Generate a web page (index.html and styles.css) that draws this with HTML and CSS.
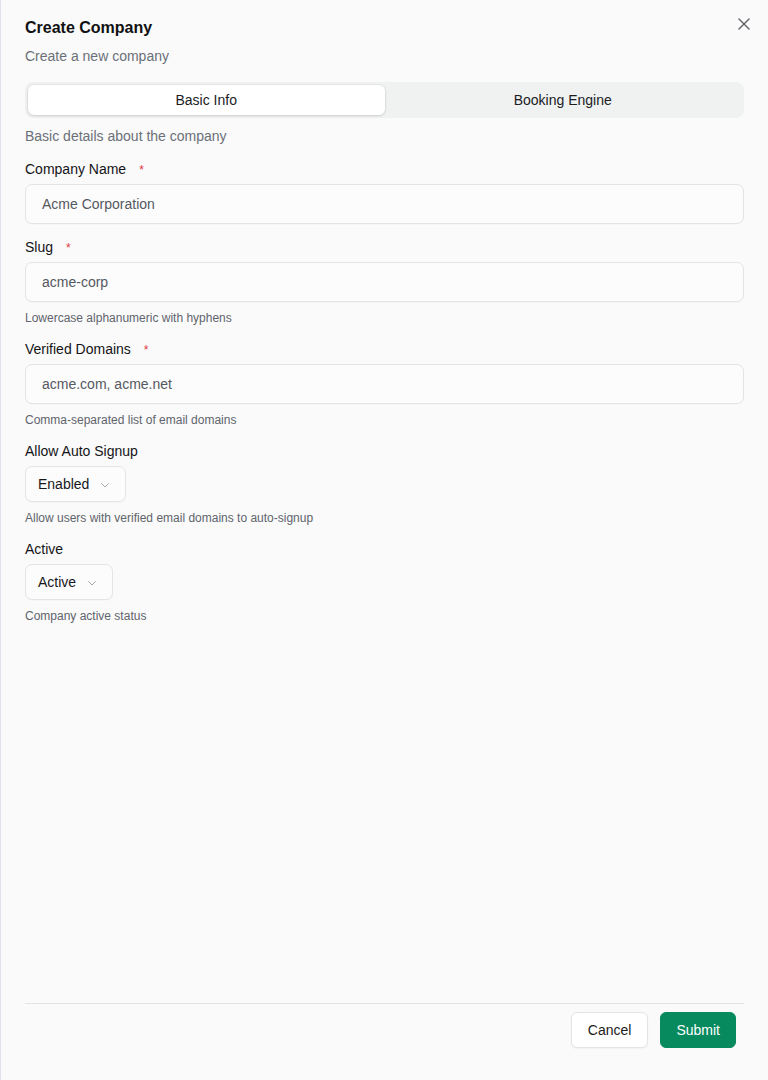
FILE: index.html
```html
<!DOCTYPE html>
<html lang="en">
<head>
<meta charset="utf-8">
<title>Create Company</title>
<link rel="stylesheet" href="styles.css">
</head>
<body>
<div class="sheet">
  <header class="head">
    <h1 class="title">Create Company</h1>
    <p class="subtitle">Create a new company</p>
    <button class="close" aria-label="Close">
      <svg width="16" height="16" viewBox="0 0 16 16" fill="none" stroke="currentColor" stroke-width="1.4" stroke-linecap="round"><path d="M3 3l10 10M13 3L3 13"/></svg>
    </button>
  </header>

  <div class="tabs">
    <div class="tab active">Basic Info</div>
    <div class="tab">Booking Engine</div>
  </div>

  <p class="desc">Basic details about the company</p>

  <div class="form">
    <div class="field">
      <label class="label">Company Name<span class="req">*</span></label>
      <div class="input">Acme Corporation</div>
    </div>
    <div class="field">
      <label class="label">Slug<span class="req">*</span></label>
      <div class="input">acme-corp</div>
      <p class="help">Lowercase alphanumeric with hyphens</p>
    </div>
    <div class="field">
      <label class="label">Verified Domains<span class="req">*</span></label>
      <div class="input">acme.com, acme.net</div>
      <p class="help">Comma-separated list of email domains</p>
    </div>
    <div class="field">
      <label class="label">Allow Auto Signup</label>
      <div class="select">Enabled
        <svg class="chev" width="12" height="12" viewBox="0 0 12 12" fill="none" stroke="currentColor" stroke-width="1" stroke-linecap="round" stroke-linejoin="round"><path d="M2.5 4.5L6 8l3.5-3.5"/></svg>
      </div>
      <p class="help">Allow users with verified email domains to auto-signup</p>
    </div>
    <div class="field">
      <label class="label">Active</label>
      <div class="select">Active
        <svg class="chev" width="12" height="12" viewBox="0 0 12 12" fill="none" stroke="currentColor" stroke-width="1" stroke-linecap="round" stroke-linejoin="round"><path d="M2.5 4.5L6 8l3.5-3.5"/></svg>
      </div>
      <p class="help">Company active status</p>
    </div>
  </div>

  <footer class="foot">
    <button class="btn btn-outline">Cancel</button>
    <button class="btn btn-primary">Submit</button>
  </footer>
</div>
</body>
</html>
```

FILE: styles.css
```css
* { box-sizing: border-box; }
html, body { margin: 0; padding: 0; }
body {
  background: #fafafa;
  font-family: "Liberation Sans", Arial, sans-serif;
  color: #18181b;
  font-size: 14px;
}
.sheet {
  min-height: 1080px;
  border-left: 1px solid #dfe2e9;
  padding: 17px 24px 0 24px;
  display: flex;
  flex-direction: column;
}
.head { position: relative; }
.title {
  margin: 0;
  font-size: 16px;
  line-height: 22px;
  font-weight: 700;
  color: #111113;
}
.subtitle {
  margin: 7px 0 0;
  line-height: 20px;
  color: #6b7078;
}
.close {
  position: absolute;
  top: -1px;
  right: -8px;
  width: 16px;
  height: 16px;
  padding: 0;
  border: 0;
  background: none;
  color: #5b5f66;
  display: flex;
}
.tabs {
  margin-top: 16px;
  height: 36px;
  background: #eff2f1;
  border-radius: 8px;
  padding: 3px;
  display: grid;
  grid-template-columns: 1fr 1fr;
}
.tab {
  display: flex;
  align-items: center;
  justify-content: center;
  border-radius: 6px;
  color: #1b1c1f;
  line-height: 20px;
}
.tab.active {
  background: #fff;
  box-shadow: 0 1px 3px rgba(0,0,0,0.12), 0 0 0 1px rgba(0,0,0,0.03);
}
.desc {
  margin: 8px 0 0;
  line-height: 20px;
  color: #6b7078;
}
.form {
  margin-top: 13px;
  display: flex;
  flex-direction: column;
  gap: 13px;
}
.field { display: flex; flex-direction: column; align-items: flex-start; }
.label {
  display: block;
  height: 20px;
  line-height: 20px;
  color: #141417;
  margin-bottom: 5px;
}
.req {
  color: #e0393e;
  font-size: 12px;
  line-height: 0;
  margin-left: 13px;
}
.input {
  width: 100%;
  height: 40px;
  border: 1px solid #e3e4e8;
  border-radius: 7px;
  background: #fcfcfc;
  padding: 0 16px;
  display: flex;
  align-items: center;
  color: #55585f;
  box-shadow: 0 1px 1px rgba(0,0,0,0.02);
}
.select {
  height: 36px;
  border: 1px solid #e3e4e8;
  border-radius: 7px;
  background: #fcfcfc;
  padding: 0 14px 0 12px;
  display: flex;
  align-items: center;
  gap: 10px;
  color: #17181b;
  box-shadow: 0 1px 1px rgba(0,0,0,0.02);
}
.chev { color: #a6a9ae; margin-top: 1px; }
.help {
  margin: 8px 0 0;
  font-size: 12px;
  line-height: 16px;
  color: #60646c;
}
.foot {
  margin-top: auto;
  border-top: 1px solid #e2e3e6;
  padding: 8px 8px 32px 0;
  display: flex;
  justify-content: flex-end;
  gap: 12px;
}
.btn {
  height: 36px;
  padding: 0 16px;
  border-radius: 6px;
  font-family: inherit;
  font-size: 14px;
  line-height: 20px;
}
.btn-outline {
  background: #fff;
  border: 1px solid #e3e4e8;
  color: #1b1c20;
  box-shadow: 0 1px 2px rgba(0,0,0,0.04);
}
.btn-primary {
  background: #068a5e;
  border: 1px solid #068a5e;
  color: #fff;
  font-weight: 500;
  padding: 0 15px;
}
```
